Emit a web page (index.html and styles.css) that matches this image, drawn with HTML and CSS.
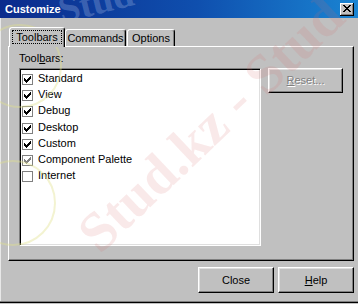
FILE: index.html
```html
<!DOCTYPE html>
<html>
<head>
<meta charset="utf-8">
<link rel="stylesheet" href="styles.css">
</head>
<body>
<div class="dialog">
  <div class="titlebar">
    <span class="title">Customize</span>
    <span class="closebtn"><svg width="8" height="7" viewBox="0 0 8 7"><path d="M0 0h2v1h-2zM6 0h2v1h-2zM1 1h2v1h-2zM5 1h2v1h-2zM2 2h4v1h-4zM3 3h2v1h-2zM2 4h4v1h-4zM1 5h2v1h-2zM5 5h2v1h-2zM0 6h2v1h-2zM6 6h2v1h-2z" fill="#000"/></svg></span>
    <span class="wm-title">Stud</span>
  </div>
  <div class="content">
    <div class="tabs">
      <div class="tab active"><span class="focus">Toolbars</span></div>
      <div class="tab t-cmd">Commands</div>
      <div class="tab t-opt">Options</div>
    </div>
    <div class="panel">
      <div class="label">Tool<u>b</u>ars:</div>
      <div class="row">
        <div class="list">
          <div class="item"><span class="cb"><svg class="chk" width="9" height="9" viewBox="0 0 9 9"><path d="M1 3h1v3h-1zM2 4h1v3h-1zM3 5h1v3h-1zM4 4h1v3h-1zM5 3h1v3h-1zM6 2h1v3h-1zM7 1h1v3h-1z"/></svg></span><span class="txt">Standard</span></div>
          <div class="item"><span class="cb"><svg class="chk" width="9" height="9" viewBox="0 0 9 9"><path d="M1 3h1v3h-1zM2 4h1v3h-1zM3 5h1v3h-1zM4 4h1v3h-1zM5 3h1v3h-1zM6 2h1v3h-1zM7 1h1v3h-1z"/></svg></span><span class="txt">View</span></div>
          <div class="item"><span class="cb"><svg class="chk" width="9" height="9" viewBox="0 0 9 9"><path d="M1 3h1v3h-1zM2 4h1v3h-1zM3 5h1v3h-1zM4 4h1v3h-1zM5 3h1v3h-1zM6 2h1v3h-1zM7 1h1v3h-1z"/></svg></span><span class="txt">Debug</span></div>
          <div class="item"><span class="cb"><svg class="chk" width="9" height="9" viewBox="0 0 9 9"><path d="M1 3h1v3h-1zM2 4h1v3h-1zM3 5h1v3h-1zM4 4h1v3h-1zM5 3h1v3h-1zM6 2h1v3h-1zM7 1h1v3h-1z"/></svg></span><span class="txt">Desktop</span></div>
          <div class="item"><span class="cb"><svg class="chk" width="9" height="9" viewBox="0 0 9 9"><path d="M1 3h1v3h-1zM2 4h1v3h-1zM3 5h1v3h-1zM4 4h1v3h-1zM5 3h1v3h-1zM6 2h1v3h-1zM7 1h1v3h-1z"/></svg></span><span class="txt">Custom</span></div>
          <div class="item"><span class="cb"><svg class="chk grey" width="9" height="9" viewBox="0 0 9 9"><path d="M1 3h1v3h-1zM2 4h1v3h-1zM3 5h1v3h-1zM4 4h1v3h-1zM5 3h1v3h-1zM6 2h1v3h-1zM7 1h1v3h-1z"/></svg></span><span class="txt">Component Palette</span></div>
          <div class="item"><span class="cb"></span><span class="txt">Internet</span></div>
        </div>
        <div class="btn reset disabled"><span><u>R</u>eset...</span></div>
      </div>
    </div>
    <div class="footer">
      <div class="btn">Close</div>
      <div class="btn"><span><u>H</u>elp</span></div>
    </div>
  </div>
  <div class="wm">
    <span class="ring ring1"></span>
    <span class="ring ring2"></span>
    <span class="wm-line">Stud.kz - Stud</span>
  </div>
</div>
</body>
</html>
```
FILE: styles.css
```css
html, body {
  margin: 0;
  padding: 0;
}
body {
  width: 358px;
  height: 304px;
  overflow: hidden;
  background: #c0c0c0;
  font-family: "Liberation Sans", Arial, sans-serif;
  font-size: 11px;
  color: #000;
}
.dialog {
  position: relative;
  width: 358px;
  height: 302px;
  background: #c0c0c0;
  border-bottom: 1px solid #000;
  box-shadow: inset 0 -1px #808080, inset 1px 0 #e8e8e8;
  overflow: hidden;
}
.titlebar {
  position: relative;
  overflow: hidden;
  height: 18px;
  display: flex;
  align-items: center;
  padding: 0 4px 0 5px;
  background: linear-gradient(90deg, #0b2b8c 0%, #0f4fae 55%, #1a84d2 100%);
}
.title {
  flex: 1;
  color: #fff;
  font-weight: bold;
  font-size: 11px;
  line-height: 13px;
  position: relative;
  z-index: 1;
}
.closebtn {
  position: relative;
  z-index: 1;
  width: 14px;
  height: 13px;
  box-sizing: border-box;
  background: #c0c0c0;
  box-shadow: inset -1px -1px #000, inset 1px 1px #fff, inset -2px -2px #808080;
  display: flex;
  align-items: center;
  justify-content: center;
  padding: 0 1px 1px 0;
}
.closebtn svg {
  shape-rendering: crispEdges;
}
.wm-title {
  position: absolute;
  left: 62px;
  top: -9px;
  font-family: "Liberation Serif", serif;
  font-weight: bold;
  font-size: 38px;
  line-height: 38px;
  color: rgba(175, 195, 235, 0.3);
  transform-origin: 0 32px;
  transform: rotate(-14deg);
  white-space: nowrap;
}
.content {
  padding: 9px 4px 0 8px;
}
.tabs {
  display: flex;
  align-items: flex-end;
  height: 19px;
  padding-left: 1px;
}
.tab {
  height: 17px;
  box-sizing: border-box;
  border: 1px solid;
  border-color: #fff #000 transparent #fff;
  border-bottom: none;
  border-radius: 3px 3px 0 0;
  box-shadow: inset -1px 0 #808080;
  background: #c0c0c0;
  display: flex;
  align-items: center;
  justify-content: center;
  line-height: 13px;
}
.tab.active {
  width: 56px;
  height: 20px;
  margin-bottom: -1px;
  position: relative;
  z-index: 1;
  padding-bottom: 2px;
}
.t-cmd {
  width: 61px;
}
.t-opt {
  width: 48px;
  margin-left: 1px;
}
.focus {
  outline: 1px dotted #000;
  padding: 0 3px;
  line-height: 12px;
}
.panel {
  width: 346px;
  height: 215px;
  box-sizing: border-box;
  border: 1px solid;
  border-color: #fff #000 #000 #fff;
  box-shadow: inset -1px -1px #808080;
  padding: 5px 0 0 10px;
}
.label {
  line-height: 13px;
  margin-bottom: 3px;
}
.row {
  display: flex;
  align-items: flex-start;
  gap: 7px;
}
.list {
  width: 242px;
  height: 178px;
  box-sizing: border-box;
  background: #fff;
  border: 1px solid;
  border-color: #808080 #fff #fff #808080;
  box-shadow: inset 1px 1px #000, inset -1px -1px #dfdfdf;
  padding: 3px 0 0 2px;
}
.item {
  height: 16.2px;
  display: flex;
  align-items: flex-start;
  gap: 5px;
}
.cb {
  flex: none;
  width: 11px;
  height: 11px;
  box-sizing: border-box;
  border: 1px solid #808080;
  background: #fff;
  margin-top: 2px;
  display: flex;
}
.chk {
  shape-rendering: crispEdges;
  fill: #000;
}
.chk.grey {
  fill: #808080;
}
.txt {
  line-height: 13px;
  white-space: nowrap;
}
.btn {
  width: 76px;
  height: 26px;
  box-sizing: border-box;
  border: 1px solid;
  border-color: #fff #000 #000 #fff;
  box-shadow: inset -1px -1px #808080, inset 1px 1px #dfdfdf;
  display: flex;
  align-items: center;
  justify-content: center;
  line-height: 13px;
  background: #c0c0c0;
}
.reset {
  width: 75px;
  height: 25px;
}
.disabled {
  color: #808080;
  text-shadow: 1px 1px #fff;
}
.footer {
  display: flex;
  justify-content: flex-end;
  gap: 4px;
  margin-top: 6px;
}
.wm {
  position: absolute;
  left: 0;
  top: 0;
  width: 358px;
  height: 304px;
  overflow: hidden;
  pointer-events: none;
}
.wm-line {
  position: absolute;
  left: 100px;
  top: 208px;
  font-family: "Liberation Serif", serif;
  font-weight: bold;
  font-size: 56px;
  line-height: 56px;
  white-space: nowrap;
  color: rgba(215, 110, 110, 0.15);
  transform-origin: 0 47px;
  transform: rotate(-43.5deg);
}
.ring {
  position: absolute;
  border-radius: 50%;
  box-sizing: border-box;
}
.ring1 {
  left: -22px;
  top: 24px;
  width: 84px;
  height: 84px;
  border: 2px solid rgba(225, 225, 140, 0.4);
}
.ring2 {
  left: -30px;
  top: 160px;
  width: 86px;
  height: 86px;
  border: 2px solid rgba(225, 225, 140, 0.4);
}
```
